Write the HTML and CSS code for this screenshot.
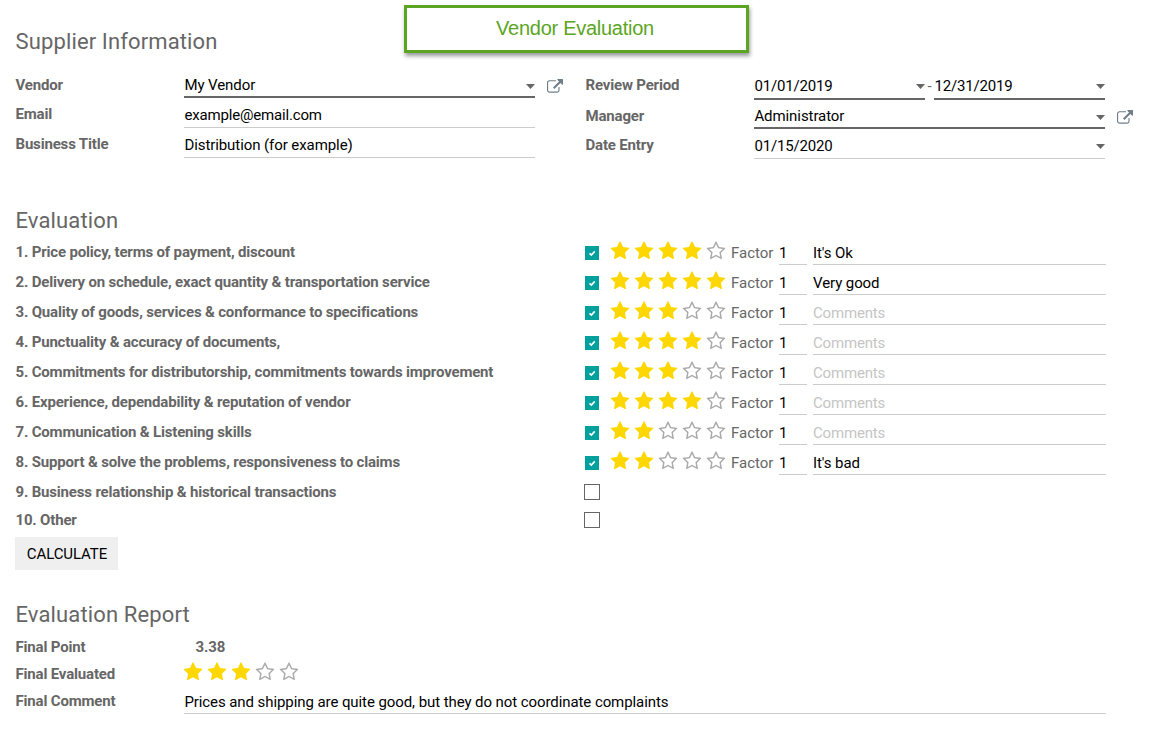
FILE: index.html
```html
<!DOCTYPE html>
<html lang="en">
<head>
<meta charset="utf-8">
<title>Vendor Evaluation</title>
<link rel="stylesheet" href="styles.css">
</head>
<body>
<svg class="sprite" aria-hidden="true">
  <symbol id="star" viewBox="0 0 1792 1792"><path d="M1728 647q0 22-26 48l-363 354 86 500q1 7 1 20 0 21-10.500 35.500t-30.500 14.500q-19 0-40-12l-449-236-449 236q-22 12-40 12-21 0-31.500-14.500t-10.500-35.500q0-6 2-20l86-500-364-354q-25-27-25-48 0-37 56-46l502-73 225-455q19-41 49-41t49 41l225 455 502 73q56 9 56 46z"/></symbol>
  <symbol id="star-o" viewBox="0 0 1792 1792"><path d="M1201 1004l306-297-422-62-189-382-189 382-422 62 306 297-73 421 378-199 377 199zm527-357q0 22-26 48l-363 354 86 500q1 7 1 20 0 50-41 50-19 0-40-12l-449-236-449 236q-22 12-40 12-21 0-31.500-14.500t-10.500-35.500q0-6 2-20l86-500-364-354q-25-27-25-48 0-37 56-46l502-73 225-455q19-41 49-41t49 41l225 455 502 73q56 9 56 46z"/></symbol>
  <symbol id="external" viewBox="0 0 1792 1792"><path d="M1408 928v320q0 119-84.500 203.500t-203.500 84.500h-832q-119 0-203.500-84.500t-84.500-203.500v-832q0-119 84.500-203.500t203.500-84.500h704q14 0 23 9t9 23v64q0 14-9 23t-23 9h-704q-66 0-113 47t-47 113v832q0 66 47 113t113 47h832q66 0 113-47t47-113v-320q0-14 9-23t23-9h64q14 0 23 9t9 23zm384-864v512q0 26-19 45t-45 19-45-19l-176-176-652 652q-10 10-23 10t-23-10l-114-114q-10-10-10-23t10-23l652-652-176-176q-19-19-19-45t19-45 45-19h512q26 0 45 19t19 45z"/></symbol>
  <symbol id="tick" viewBox="0 0 14 14"><path d="M4.500 7.300l1.900 1.800 3.300-3.700" fill="none" stroke="#fff" stroke-width="1.600"/></symbol>
</svg>
<header class="header">
  <h2 class="heading">Supplier Information</h2>
  <h1 class="banner">Vendor Evaluation</h1>
</header>
<section class="info">
  <div class="group group-left">
    <div class="row"><label class="label">Vendor</label><div class="field required">My Vendor<i class="caret"></i></div><svg class="external"><use href="#external"/></svg></div>
    <div class="row"><label class="label raised">Email</label><div class="field"><span class="wide">example@email.com</span></div></div>
    <div class="row"><label class="label raised">Business Title</label><div class="field">Distribution (for example)</div></div>
  </div>
  <div class="group group-right">
    <div class="row"><label class="label">Review Period</label><div class="range"><div class="field required"><span class="wide">01/01/2019</span><i class="caret"></i></div><span class="dash">-</span><div class="field required"><span class="wide">12/31/2019</span><i class="caret"></i></div></div></div>
    <div class="row"><label class="label">Manager</label><div class="field required"><span>Administrator</span><i class="caret"></i></div><svg class="external"><use href="#external"/></svg></div>
    <div class="row"><label class="label raised">Date Entry</label><div class="field"><span class="wide">01/15/2020</span><i class="caret"></i></div></div>
  </div>
</section>
<h2 class="heading heading-eval">Evaluation</h2>
<section class="criteria">
  <div class="criterion"><label class="label">1. Price policy, terms of payment, discount</label><svg class="check"><use href="#tick"/></svg><div class="stars"><svg><use href="#star"/></svg><svg><use href="#star"/></svg><svg><use href="#star"/></svg><svg><use href="#star"/></svg><svg class="off"><use href="#star-o"/></svg></div><span class="factor">Factor</span><div class="field number">1</div><div class="field comment">It's Ok</div></div>
  <div class="criterion"><label class="label">2. Delivery on schedule, exact quantity &amp; transportation service</label><svg class="check"><use href="#tick"/></svg><div class="stars"><svg><use href="#star"/></svg><svg><use href="#star"/></svg><svg><use href="#star"/></svg><svg><use href="#star"/></svg><svg><use href="#star"/></svg></div><span class="factor">Factor</span><div class="field number">1</div><div class="field comment">Very good</div></div>
  <div class="criterion"><label class="label">3. Quality of goods, services &amp; conformance to specifications</label><svg class="check"><use href="#tick"/></svg><div class="stars"><svg><use href="#star"/></svg><svg><use href="#star"/></svg><svg><use href="#star"/></svg><svg class="off"><use href="#star-o"/></svg><svg class="off"><use href="#star-o"/></svg></div><span class="factor">Factor</span><div class="field number">1</div><div class="field comment empty">Comments</div></div>
  <div class="criterion"><label class="label">4. Punctuality &amp; accuracy of documents,</label><svg class="check"><use href="#tick"/></svg><div class="stars"><svg><use href="#star"/></svg><svg><use href="#star"/></svg><svg><use href="#star"/></svg><svg><use href="#star"/></svg><svg class="off"><use href="#star-o"/></svg></div><span class="factor">Factor</span><div class="field number">1</div><div class="field comment empty">Comments</div></div>
  <div class="criterion"><label class="label">5. Commitments for distributorship, commitments towards improvement</label><svg class="check"><use href="#tick"/></svg><div class="stars"><svg><use href="#star"/></svg><svg><use href="#star"/></svg><svg><use href="#star"/></svg><svg class="off"><use href="#star-o"/></svg><svg class="off"><use href="#star-o"/></svg></div><span class="factor">Factor</span><div class="field number">1</div><div class="field comment empty">Comments</div></div>
  <div class="criterion"><label class="label">6. Experience, dependability &amp; reputation of vendor</label><svg class="check"><use href="#tick"/></svg><div class="stars"><svg><use href="#star"/></svg><svg><use href="#star"/></svg><svg><use href="#star"/></svg><svg><use href="#star"/></svg><svg class="off"><use href="#star-o"/></svg></div><span class="factor">Factor</span><div class="field number">1</div><div class="field comment empty">Comments</div></div>
  <div class="criterion"><label class="label">7. Communication &amp; Listening skills</label><svg class="check"><use href="#tick"/></svg><div class="stars"><svg><use href="#star"/></svg><svg><use href="#star"/></svg><svg class="off"><use href="#star-o"/></svg><svg class="off"><use href="#star-o"/></svg><svg class="off"><use href="#star-o"/></svg></div><span class="factor">Factor</span><div class="field number">1</div><div class="field comment empty">Comments</div></div>
  <div class="criterion"><label class="label">8. Support &amp; solve the problems, responsiveness to claims</label><svg class="check"><use href="#tick"/></svg><div class="stars"><svg><use href="#star"/></svg><svg><use href="#star"/></svg><svg class="off"><use href="#star-o"/></svg><svg class="off"><use href="#star-o"/></svg><svg class="off"><use href="#star-o"/></svg></div><span class="factor">Factor</span><div class="field number">1</div><div class="field comment">It's bad</div></div>
  <div class="criterion"><label class="label">9. Business relationship &amp; historical transactions</label><span class="unchecked"></span></div>
  <div class="criterion last"><label class="label">10. Other</label><span class="unchecked"></span></div>
</section>
<button class="button">CALCULATE</button>
<h2 class="heading heading-report">Evaluation Report</h2>
<section class="report">
  <div class="row"><label class="label">Final Point</label><b class="point">3.38</b></div>
  <div class="row"><label class="label">Final Evaluated</label><div class="stars"><svg><use href="#star"/></svg><svg><use href="#star"/></svg><svg><use href="#star"/></svg><svg class="off"><use href="#star-o"/></svg><svg class="off"><use href="#star-o"/></svg></div></div>
  <div class="row"><label class="label">Final Comment</label><div class="field final">Prices and shipping are quite good, but they do not coordinate complaints</div></div>
</section>
</body>
</html>
```
FILE: styles.css
```css
* { box-sizing: border-box; }
body { margin: 0; padding: 5px 0 0 15px; width: 1164px; height: 740px; overflow: hidden; background: #fff; color: #666; font: 15px/20px Roboto, sans-serif; }
.sprite { display: none; }
.header { display: flex; height: 63px; }
.heading { margin: 0; padding: 1px 0 0 .5px; font-size: 22px; line-height: 28px; font-weight: 400; letter-spacing: .13px; }
.header .heading { width: 389px; padding-top: 23px; }
.banner { margin: 0; width: 345px; height: 48px; border: 3px solid #5ca524; box-shadow: 1px 3px 4px rgba(0, 0, 0, .4); color: #5ca524; font: 20px/40px "Liberation Sans", Arial, sans-serif; letter-spacing: -.27px; text-align: center; padding-right: 3px; }
.info { display: flex; height: 138px; }
.group-left { width: 570px; }
.row { display: flex; height: 30px; }
.label { width: 169px; flex: none; padding: 7px 0 0 .5px; font-weight: 700; font-size: 15px; letter-spacing: -.175px; white-space: nowrap; }
.label.raised { padding-top: 6px; }
.field { display: flex; justify-content: space-between; width: 351px; height: 100%; flex: none; padding: 7px 0 0 .4px; border-bottom: 1px solid #ccc; color: #000; letter-spacing: -.08px; white-space: nowrap; }
.wide { letter-spacing: -.17px; }
.required { border-bottom: 2px solid #666; }
.caret { width: 9px; height: 5px; margin-top: 9px; background: #666; clip-path: polygon(0 0, 100% 0, 50% 100%); }
.external { width: 16px; height: 16px; margin: 10.500px 0 0 11.500px; fill: #6f7d88; }
.group-right .row:nth-child(1) { height: 32px; }
.group-right .row:nth-child(1) .field { padding-top: 8px; }
.group-right .row:nth-child(1) .caret { margin-top: 8px; }
.group-right .row:nth-child(2) { height: 29px; }
.group-right .row:nth-child(2) .label { padding-top: 6px; }
.group-right .row:nth-child(2) .field { padding-top: 6px; }
.group-right .external { margin-top: 9.500px; }
.group-right .row:nth-child(3) .caret { margin-top: 8px; }
.range { display: flex; width: 351px; }
.range .field { width: 171px; }
.dash { width: 9px; padding-top: 8px; text-align: center; }
.heading-eval { height: 29px; }
.criterion { display: flex; height: 30px; }
.criterion .label { width: 570px; }
.criterion.last { height: 32px; }
.criterion.last .label { padding-top: 5px; }
.check { width: 14px; height: 14px; margin: 11px 10.600px 0 0; background: #00a09d; }
.unchecked { width: 16px; height: 16px; margin: 9px 0 0 -1px; border: 1px solid #666; }
.last .unchecked { margin-top: 7px; }
.stars { display: flex; gap: 4px; padding-top: 5.500px; fill: #ffd700; }
.stars svg { width: 20px; height: 20px; }
.stars .off { fill: #aaa; }
.factor { width: 48px; margin-left: 5.400px; padding-top: 8px; }
.field.number { width: 28px; padding: 8px 0 0; }
.field.comment { width: 293px; margin-left: 6px; padding: 8px 0 0; }
.field.empty { color: #c5c5c5; letter-spacing: -.17px; }
.button { display: block; width: 103px; height: 33px; padding: 0 0 0 1px; border: 0; background: #efefef; color: #000; font: 15px/20px Roboto, sans-serif; letter-spacing: -.1px; }
.heading-report { padding-top: 31px; height: 60px; }
.report .row { height: 27px; }
.report .row:nth-child(3) { height: 30px; }
.point { padding: 7px 0 0 11.500px; letter-spacing: -.1px; }
.report .stars { padding-top: 4.500px; margin-left: -.6px; }
.report .field.final { width: 922px; height: 30px; padding-top: 8px; }
```
